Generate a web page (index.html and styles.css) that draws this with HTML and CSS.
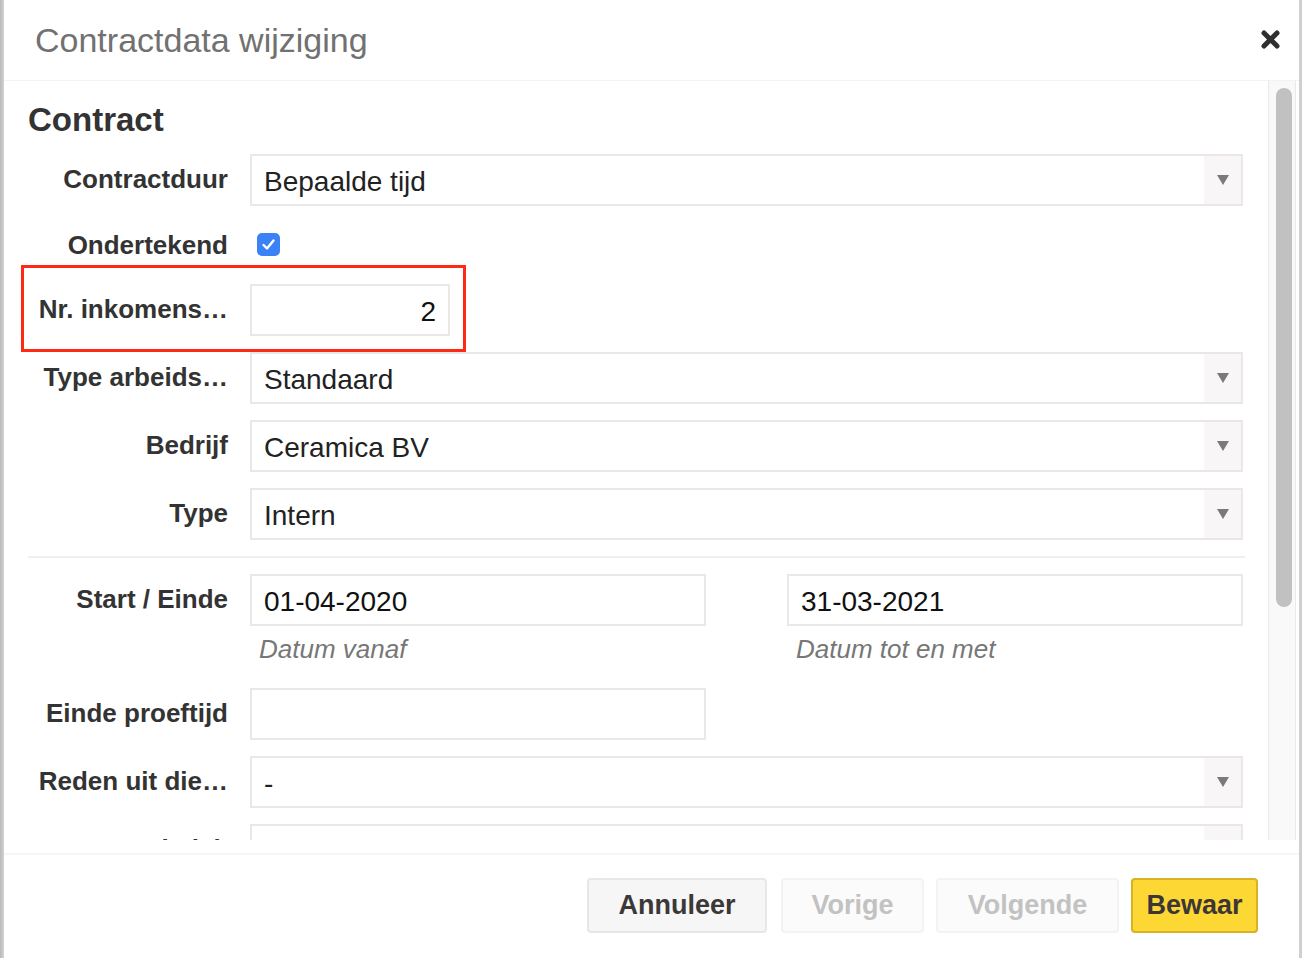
FILE: index.html
```html
<!DOCTYPE html>
<html lang="nl">
<head>
  <meta charset="UTF-8">
  <title>Contractdata wijziging</title>
  <link rel="stylesheet" href="styles.css">
</head>
<body>

<div class="modal">
  <div class="modal-header">
    <h1 class="modal-title">Contractdata wijziging</h1>
    <button class="close-btn" title="Sluiten">
      <svg width="19" height="19" viewBox="0 0 19 19"><path d="M3 3 L16 16 M16 3 L3 16" stroke="#2f2f2f" stroke-width="5" stroke-linecap="round"/></svg>
    </button>
  </div>

  <div class="modal-body">
    <div class="form-scroll">
      <h2 class="section-title">Contract</h2>

      <div class="form-row">
        <label class="form-label">Contractduur</label>
        <div class="form-field">
          <div class="select"><span class="select-value">Bepaalde tijd</span><span class="select-arrow"></span></div>
        </div>
      </div>

      <div class="form-row check-row">
        <label class="form-label">Ondertekend</label>
        <div class="form-field">
          <span class="checkbox">
            <svg width="23" height="23" viewBox="0 0 23 23"><rect width="23" height="23" rx="5" fill="#3b82f6"/><path d="M6.5 12 L10 15.5 L16.5 7.5" fill="none" stroke="#fff" stroke-width="2.4" stroke-linecap="round" stroke-linejoin="round"/></svg>
          </span>
        </div>
      </div>

      <div class="form-row marked-row">
        <label class="form-label">Nr. inkomens…</label>
        <div class="form-field">
          <div class="text-input number-input">2</div>
        </div>
        <div class="highlight-box"></div>
      </div>

      <div class="form-row">
        <label class="form-label">Type arbeids…</label>
        <div class="form-field">
          <div class="select"><span class="select-value">Standaard</span><span class="select-arrow"></span></div>
        </div>
      </div>

      <div class="form-row">
        <label class="form-label">Bedrijf</label>
        <div class="form-field">
          <div class="select"><span class="select-value">Ceramica BV</span><span class="select-arrow"></span></div>
        </div>
      </div>

      <div class="form-row">
        <label class="form-label">Type</label>
        <div class="form-field">
          <div class="select"><span class="select-value">Intern</span><span class="select-arrow"></span></div>
        </div>
      </div>

      <hr class="divider">

      <div class="form-row">
        <label class="form-label">Start / Einde</label>
        <div class="form-field date-grid">
          <div>
            <div class="text-input">01-04-2020</div>
            <div class="help-text">Datum vanaf</div>
          </div>
          <div>
            <div class="text-input">31-03-2021</div>
            <div class="help-text">Datum tot en met</div>
          </div>
        </div>
      </div>

      <div class="form-row">
        <label class="form-label">Einde proeftijd</label>
        <div class="form-field date-grid">
          <div class="text-input"></div>
        </div>
      </div>

      <div class="form-row">
        <label class="form-label">Reden uit die…</label>
        <div class="form-field">
          <div class="select"><span class="select-value">-</span><span class="select-arrow"></span></div>
        </div>
      </div>

      <div class="form-row">
        <label class="form-label">Werkplek</label>
        <div class="form-field">
          <div class="select"><span class="select-value"></span><span class="select-arrow"></span></div>
        </div>
      </div>
    </div>

    <div class="scrollbar"><div class="scrollbar-thumb"></div></div>
  </div>

  <div class="modal-footer">
    <button class="btn btn-default">Annuleer</button>
    <button class="btn btn-disabled btn-prev">Vorige</button>
    <button class="btn btn-disabled btn-next">Volgende</button>
    <button class="btn btn-primary">Bewaar</button>
  </div>
</div>

</body>
</html>
```

FILE: styles.css
```css
body {
  margin: 0;
  font-family: "Liberation Sans", Arial, sans-serif;
  background: linear-gradient(to right, #b9b9b9 0, #d3d3d3 4px, #cfcfcf 100%);
  height: 958px;
  overflow: hidden;
}
.modal {
  margin-left: 4px;
  width: 1295px;
  height: 958px;
  background: white;
  display: flex;
  flex-direction: column;
}
.modal-header {
  height: 80px;
  border-bottom: 1px solid #f3f3f3;
  display: flex;
  align-items: center;
  justify-content: space-between;
  padding: 0 19px 0 31px;
}
.modal-title {
  margin: 0;
  font-size: 34px;
  font-weight: normal;
  color: #727171;
}
.close-btn {
  border: none;
  background: none;
  padding: 0;
  width: 19px;
  height: 19px;
  margin-top: -1px;
  cursor: pointer;
}
.close-btn svg {
  display: block;
}
.modal-body {
  height: 759px;
  display: flex;
  margin-bottom: 13px;
}
.form-scroll {
  flex: 1;
  overflow: hidden;
  padding: 20px 25px 0 24px;
}
.section-title {
  margin: 0 0 15px;
  font-size: 33px;
  line-height: 38px;
  font-weight: bold;
  color: #333;
}
.form-row {
  display: flex;
  gap: 22px;
  margin-bottom: 16px;
}
.check-row {
  height: 46px;
  align-items: center;
}
.check-row .form-label {
  line-height: 46px;
}
.marked-row {
  position: relative;
}
.highlight-box {
  position: absolute;
  left: -7px;
  top: -19px;
  width: 445px;
  height: 87px;
  box-sizing: border-box;
  border: 3px solid #ff2a16;
}
.form-label {
  width: 200px;
  flex-shrink: 0;
  text-align: right;
  font-size: 26px;
  font-weight: bold;
  line-height: 50px;
  color: #333;
  white-space: nowrap;
}
.form-field {
  flex: 1;
}
.select {
  height: 52px;
  box-sizing: border-box;
  border: 2px solid #ebe7e9;
  display: flex;
  align-items: center;
  background: white;
}
.select-value {
  flex: 1;
  padding-left: 12px;
  font-size: 28px;
  color: #222;
  padding-top: 3px;
}
.select-arrow {
  width: 37px;
  height: 100%;
  background: #f8f6f7;
  position: relative;
}
.select-arrow::after {
  content: "";
  position: absolute;
  left: 13px;
  top: 19px;
  border-left: 6px solid transparent;
  border-right: 6px solid transparent;
  border-top: 10px solid #7a7a7a;
}
.checkbox {
  display: inline-block;
  margin-left: 7px;
  margin-top: 3px;
}
.checkbox svg {
  display: block;
}
.text-input {
  height: 52px;
  box-sizing: border-box;
  border: 2px solid #ebe7e9;
  padding: 4px 12px 0;
  font-size: 28px;
  line-height: 44px;
  color: #111;
}
.number-input {
  width: 200px;
  text-align: right;
  padding-right: 12px;
}
.date-grid {
  display: grid;
  grid-template-columns: 1fr 1fr;
  gap: 81px;
}
.help-text {
  font-size: 26px;
  font-style: italic;
  color: #777;
  line-height: 46px;
  padding-left: 9px;
}
.divider {
  border: none;
  border-top: 2px solid #f0eeef;
  margin: 0 -2px 16px 0;
}
.scrollbar {
  box-sizing: border-box;
  width: 28px;
  margin-right: 3px;
  background: #f9f9f9;
  border-left: 1px solid #e9e9e9;
  border-right: 1px solid #e9e9e9;
  padding: 7px 0 0 7px;
}
.scrollbar-thumb {
  width: 16px;
  height: 519px;
  border-radius: 8px;
  background: #c1c1c1;
}
.modal-footer {
  border-top: 2px solid #f6f6f6;
  display: flex;
  justify-content: flex-end;
  gap: 12px;
  padding: 23px 41px 0 0;
}
.btn {
  width: 180px;
  height: 55px;
  padding: 0;
  font-family: "Liberation Sans", Arial, sans-serif;
  font-size: 27px;
  font-weight: bold;
  border-radius: 4px;
  border: 2px solid #e7e7e7;
  cursor: pointer;
}
.btn-default {
  background: #f7f6f7;
  color: #3b3838;
  margin-right: 2px;
}
.btn-disabled {
  background: #fbfbfb;
  border-color: #f3f3f3;
  color: #c2c2c2;
}
.btn-prev {
  width: 143px;
}
.btn-next {
  width: 183px;
}
.btn-primary {
  width: 127px;
  background: #fdd733;
  border-color: #d7b223;
  color: #3d3636;
}
```
